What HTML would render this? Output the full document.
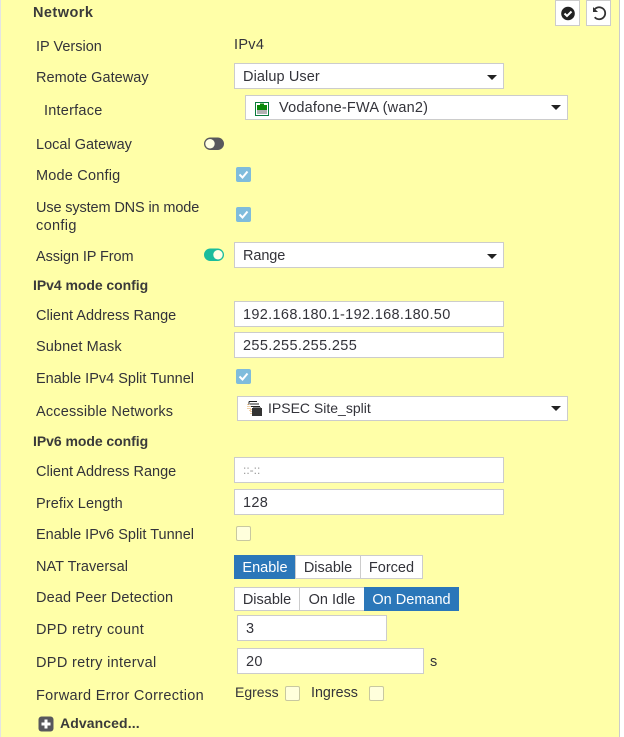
<!DOCTYPE html>
<html><head><meta charset="utf-8"><style>
html,body{margin:0;padding:0;width:624px;height:737px;overflow:hidden;background:#fff}
#p{position:absolute;left:1px;top:0;width:618px;height:737px;background:#ffffa8}
#edge{position:absolute;left:619px;top:0;width:1px;height:737px;background:#ccc}
#edge0{position:absolute;left:0;top:0;width:1px;height:737px;background:#e4e4e4}
.t{position:absolute;margin-top:1px;font:14.5px/18px "Liberation Sans",sans-serif;color:#33333a;white-space:nowrap}
.b{font-weight:bold;color:#3a3a3a;font-size:14px;margin-top:0}
.box{position:absolute;box-sizing:border-box;background:#fff;border:1px solid #ccc;font:14.5px/22px "Liberation Sans",sans-serif;color:#33333a;padding-left:8px;padding-top:1px;white-space:nowrap}
.arr{position:absolute;width:0;height:0;border-left:5px solid transparent;border-right:5px solid transparent;border-top:5px solid #222}
.cb{position:absolute;box-sizing:border-box;width:15px;height:15px;border-radius:2px}
.cb.on{background:#7fbcdc}
.cb.off{background:#ffffdc;border:1px solid #c8c8a0}
.cb svg{position:absolute;left:0;top:0}
.seg{position:absolute;box-sizing:border-box;height:24px;background:#fff;border:1px solid #ccc;font:14.5px/22px "Liberation Sans",sans-serif;color:#33333a;text-align:center;white-space:nowrap;padding-top:1px}
.seg.a{background:#2b77b9;border-color:#2b77b9;color:#fff}
svg{display:block}
</style></head><body>
<div id="edge0"></div><div id="p"></div><div id="edge"></div>

<div class="t b" style="left:33px;top:4px;font-size:14.5px;letter-spacing:.45px">Network</div>
<div class="box" style="left:555px;top:0;width:25px;height:26px;padding:0">
<svg width="23" height="24" style="position:absolute;left:0;top:0"><circle cx="12" cy="12.500" r="6.800" fill="#222"/><path d="M8.500 12.500l2.500 2.500 4.500-4.500" fill="none" stroke="#fff" stroke-width="2"/></svg></div>
<div class="box" style="left:586px;top:0;width:25px;height:26px;padding:0">
<svg width="23" height="24" style="position:absolute;left:0;top:0"><path d="M7.500 8.500a6 6 0 1 1 .2 7.700" fill="none" stroke="#333" stroke-width="1.800"/><path d="M6 6v5h5z" fill="#333"/></svg></div>

<div class="t" style="left:36px;top:37px">IP Version</div>
<div class="t" style="left:234px;top:35px;letter-spacing:.3px">IPv4</div>

<div class="t" style="left:36px;top:68px;letter-spacing:.05px">Remote Gateway</div>
<div class="box" style="left:234px;top:63px;width:270px;height:26px;line-height:24px;letter-spacing:.1px">Dialup User</div>
<div class="arr" style="left:487px;top:75px"></div>

<div class="t" style="left:44px;top:101px;letter-spacing:.23px">Interface</div>
<div class="box" style="left:245px;top:95px;width:323px;height:25px;line-height:23px;padding-left:33px;letter-spacing:.2px">Vodafone-FWA (wan2)</div>
<svg width="14" height="14" style="position:absolute;left:255px;top:102px"><rect x=".5" y=".5" width="13" height="13" fill="#fff" stroke="#0a7a3c"/><rect x="2" y="3" width="10" height="5" fill="#0a8a0a"/><rect x="5" y="1.500" width="4" height="2" fill="#0a8a0a"/><path d="M3 8v4M5 8v4M7 8v4M9 8v4M11 8v4" stroke="#666" stroke-width="1"/></svg>
<div class="arr" style="left:551px;top:105px"></div>

<div class="t" style="left:36px;top:135px">Local Gateway</div>
<svg width="21" height="14" style="position:absolute;left:204px;top:137px"><rect x="0" y=".5" width="20" height="12.500" rx="6.250" fill="#58585c"/><circle cx="6" cy="6.750" r="4.700" fill="#ffffe4"/></svg>

<div class="t" style="left:36px;top:166px;letter-spacing:.2px">Mode Config</div>
<div class="cb on" style="left:236px;top:167px"><svg width="15" height="15"><path d="M3.500 7.500l3 3 5-6" fill="none" stroke="#fff" stroke-width="2"/></svg></div>

<div class="t" style="left:36px;top:198px;letter-spacing:-.13px">Use system DNS in mode</div>
<div class="t" style="left:36px;top:216px;letter-spacing:.35px">config</div>
<div class="cb on" style="left:236px;top:207px"><svg width="15" height="15"><path d="M3.500 7.500l3 3 5-6" fill="none" stroke="#fff" stroke-width="2"/></svg></div>

<div class="t" style="left:36px;top:247px;letter-spacing:-.1px">Assign IP From</div>
<svg width="21" height="14" style="position:absolute;left:204px;top:248px"><rect x="0" y=".5" width="20" height="12.500" rx="6.250" fill="#1abc9c"/><circle cx="14" cy="6.750" r="4.700" fill="#ffffe4"/></svg>
<div class="box" style="left:234px;top:242px;width:270px;height:26px;line-height:24px;letter-spacing:-.1px">Range</div>
<div class="arr" style="left:487px;top:254px"></div>

<div class="t b" style="left:33px;top:276px;letter-spacing:-.05px">IPv4 mode config</div>

<div class="t" style="left:36px;top:306px">Client Address Range</div>
<div class="box" style="left:234px;top:301px;width:270px;height:26px;line-height:24px;letter-spacing:.33px">192.168.180.1-192.168.180.50</div>

<div class="t" style="left:36px;top:337px;letter-spacing:.1px">Subnet Mask</div>
<div class="box" style="left:234px;top:332px;width:270px;height:26px;line-height:24px;letter-spacing:.35px">255.255.255.255</div>

<div class="t" style="left:36px;top:369px">Enable IPv4 Split Tunnel</div>
<div class="cb on" style="left:236px;top:369px"><svg width="15" height="15"><path d="M3.500 7.500l3 3 5-6" fill="none" stroke="#fff" stroke-width="2"/></svg></div>

<div class="t" style="left:36px;top:402px;letter-spacing:.18px">Accessible Networks</div>
<div class="box" style="left:237px;top:396px;width:331px;height:25px;line-height:23px;padding-left:30px;padding-top:0;font-size:14px">IPSEC Site_split</div>
<svg width="16" height="16" style="position:absolute;left:247px;top:401px"><path d="M2 .5h8M2 .5v3M3 3h9M4 5.500h9" stroke="#222" stroke-width="1" fill="none"/><path d="M1 3v5M3 5v6M4 8v6" stroke="#e0a050" stroke-width="1" stroke-dasharray="1 1"/><rect x="5" y="7" width="10" height="8" fill="#333"/><rect x="6" y="6" width="8" height="1" fill="#888"/></svg>
<div class="arr" style="left:551px;top:406px"></div>

<div class="t b" style="left:33px;top:432px;letter-spacing:-.05px">IPv6 mode config</div>

<div class="t" style="left:36px;top:462px">Client Address Range</div>
<div class="box" style="left:234px;top:457px;width:270px;height:26px;line-height:24px;padding-top:0;color:#999;font-size:12px">::-::</div>

<div class="t" style="left:36px;top:494px;letter-spacing:.1px">Prefix Length</div>
<div class="box" style="left:234px;top:489px;width:270px;height:26px;line-height:24px;letter-spacing:.3px">128</div>

<div class="t" style="left:36px;top:525px">Enable IPv6 Split Tunnel</div>
<div class="cb off" style="left:236px;top:526px"></div>

<div class="t" style="left:36px;top:557px;letter-spacing:.05px">NAT Traversal</div>
<div class="seg a" style="left:234px;top:555px;width:62px">Enable</div>
<div class="seg" style="left:295px;top:555px;width:66px">Disable</div>
<div class="seg" style="left:360px;top:555px;width:63px">Forced</div>

<div class="t" style="left:36px;top:588px;letter-spacing:.14px">Dead Peer Detection</div>
<div class="seg" style="left:234px;top:587px;width:66px">Disable</div>
<div class="seg" style="left:299px;top:587px;width:66px">On Idle</div>
<div class="seg a" style="left:364px;top:587px;width:95px">On Demand</div>

<div class="t" style="left:36px;top:620px;letter-spacing:.33px">DPD retry count</div>
<div class="box" style="left:237px;top:615px;width:150px;height:26px;line-height:24px">3</div>

<div class="t" style="left:36px;top:653px;letter-spacing:.34px">DPD retry interval</div>
<div class="box" style="left:237px;top:648px;width:187px;height:26px;line-height:24px;letter-spacing:.3px">20</div>
<div class="t" style="left:430px;top:652px">s</div>

<div class="t" style="left:36px;top:686px;letter-spacing:.32px">Forward Error Correction</div>
<div class="t" style="left:235px;top:683px;margin-top:0;font-size:14px">Egress</div>
<div class="cb off" style="left:285px;top:686px"></div>
<div class="t" style="left:311px;top:683px;font-size:14.300px">Ingress</div>
<div class="cb off" style="left:369px;top:686px"></div>

<svg width="16" height="16" style="position:absolute;left:38px;top:716px"><rect x=".500" y=".500" width="15" height="15" rx="3" fill="#58585c"/><path d="M8 3.500v9M3.500 8h9" stroke="#fff" stroke-width="3"/></svg>
<div class="t b" style="left:60px;top:714px;letter-spacing:.1px">Advanced...</div>
</body></html>
